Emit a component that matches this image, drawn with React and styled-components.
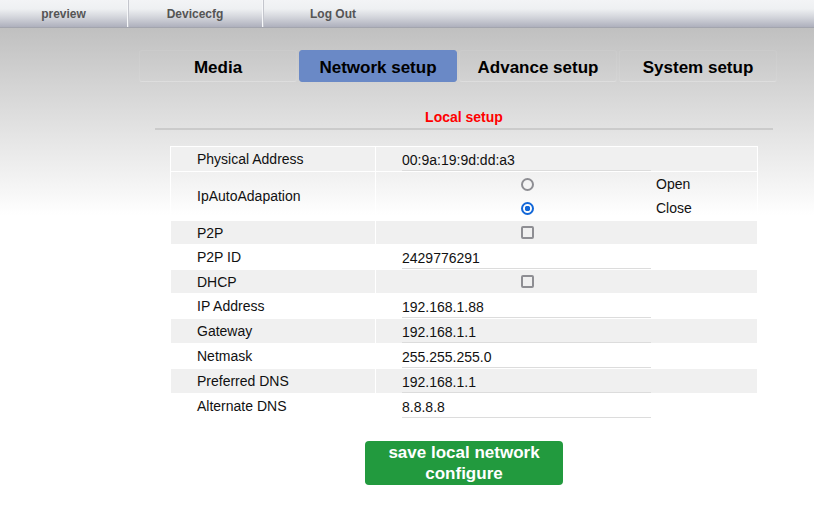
import styled, { createGlobalStyle } from "styled-components"
import { useState } from "react"

const GlobalStyle = createGlobalStyle`
  html, body {
    margin: 0;
    padding: 0;
    background: #fff;
    font-family: "Liberation Sans", Arial, sans-serif;
  }
`

const Page = styled.div`
  width: 814px;
  min-height: 519px;
  background: linear-gradient(to bottom, #c0c0c0 28px, #d2d2d2 80px, #e6e6e6 140px, #f6f6f6 190px, #fff 215px);
`

const TopBar = styled.div`
  height: 27px;
  display: flex;
  background: linear-gradient(to bottom, #f3f4f6 0px, #eef0f2 9px, #d4d6dc 17px, #aeb0bd 27px);
  border-bottom: 1px solid #a3a5ae;
`

const TopItem = styled.a`
  width: ${({ w }) => w}px;
  display: flex;
  align-items: center;
  justify-content: center;
  font-size: 12px;
  font-weight: bold;
  color: #555;
  text-decoration: none;
  border-right: ${({ last }) => (last ? "none" : "1px solid #f7f8fa")};
  box-shadow: ${({ last }) => (last ? "none" : "1px 0 0 #c4c6cd")};
`

const TabRow = styled.div`
  display: flex;
  gap: 2px;
  margin: 22px 0 0 139px;
`

const Tab = styled.div`
  width: 158px;
  height: 32px;
  padding-top: 3px;
  display: flex;
  align-items: center;
  justify-content: center;
  font-size: 17px;
  font-weight: bold;
  color: #000;
  border-radius: 3px;
  background: ${({ active }) => (active ? "#6a89c6" : "transparent")};
  border: 1px solid ${({ active }) => (active ? "#6a89c6" : "rgba(255,255,255,0.07)")};
  border-bottom-color: ${({ active }) => (active ? "#6a89c6" : "rgba(255,255,255,0.25)")};
  box-sizing: border-box;
`

const Content = styled.div`
  width: 618px;
  margin-left: 155px;
`

const SectionTitle = styled.div`
  padding-top: 6px;
  margin-top: 18px;
  line-height: 22px;
  text-align: center;
  font-size: 14px;
  font-weight: bold;
  color: #f00;
  border-bottom: 2px solid #cbcbcb;
`

const Table = styled.table`
  margin: 16px 0 0 15px;
  width: 588px;
  border-collapse: collapse;
  font-size: 14px;
  color: #111;
`

const Row = styled.tr`
  background: ${({ shade }) => (shade ? "#f0f0f0" : "transparent")};
`

const LabelCell = styled.td`
  width: 205px;
  height: 24px;
  padding: 0 0 0 26px;
  box-sizing: border-box;
  border: 1px solid #fff;
  vertical-align: middle;
`

const ValueCell = styled.td`
  padding: 0 0 0 26px;
  border: 1px solid #fff;
  vertical-align: middle;
`

const Field = styled.input`
  display: block;
  width: 249px;
  height: 21px;
  margin-top: 2px;
  padding: 0;
  border: none;
  border-bottom: 1px solid #dcdcdc;
  background: transparent;
  font: 14px "Liberation Sans", Arial, sans-serif;
  color: #111;
  outline: none;
`

const Options = styled.div`
  display: grid;
  grid-template-columns: 114px 22px 118px auto;
  grid-auto-rows: 24px;
  align-items: center;
  margin-left: -26px;
  padding: 0 0 0 26px;
`

const Choice = styled.input`
  grid-column: 2;
  justify-self: center;
  appearance: none;
  box-sizing: border-box;
  margin: 0;
  width: 13px;
  height: 13px;
  border-radius: 50%;
  border: 2px solid #8e8e93;
  background: transparent;

  &:checked {
    border-color: #1267d8;
    background: radial-gradient(circle, #1267d8 0 2.6px, transparent 3px);
  }
`

const ChoiceText = styled.span`
  grid-column: 4;
`

const CheckWrap = styled.div`
  width: 302px;
  display: flex;
  justify-content: center;
  margin-left: -26px;
`

const Check = styled.input`
  appearance: none;
  box-sizing: border-box;
  margin: 0;
  width: 13px;
  height: 13px;
  border: 2px solid #8e8e93;
  border-radius: 2px;
  background: transparent;
`

const SaveButton = styled.button`
  display: block;
  margin: 22px auto 0;
  width: 198px;
  height: 44px;
  padding: 0 8px;
  border: none;
  border-radius: 4px;
  background: #229a3e;
  color: #fff;
  font: bold 17px/21px "Liberation Sans", Arial, sans-serif;
`

const fields = [
  { label: "IP Address", value: "192.168.1.88" },
  { label: "Gateway", value: "192.168.1.1" },
  { label: "Netmask", value: "255.255.255.0" },
  { label: "Preferred DNS", value: "192.168.1.1" },
  { label: "Alternate DNS", value: "8.8.8.8" },
]

const App = () => {
  const [autoAdapt, setAutoAdapt] = useState("close")

  return (
    <Page>
      <GlobalStyle />
      <TopBar>
        <TopItem w={127}>preview</TopItem>
        <TopItem w={134}>Devicecfg</TopItem>
        <TopItem w={140} last>Log Out</TopItem>
      </TopBar>

      <TabRow>
        <Tab>Media</Tab>
        <Tab active>Network setup</Tab>
        <Tab>Advance setup</Tab>
        <Tab>System setup</Tab>
      </TabRow>

      <Content>
        <SectionTitle>Local setup</SectionTitle>
        <Table>
          <tbody>
            <Row shade>
              <LabelCell>Physical Address</LabelCell>
              <ValueCell>
                <Field readOnly defaultValue="00:9a:19:9d:dd:a3" />
              </ValueCell>
            </Row>
            <Row>
              <LabelCell>IpAutoAdapation</LabelCell>
              <ValueCell>
                <Options>
                  <Choice
                    type="radio"
                    name="auto"
                    checked={autoAdapt === "open"}
                    onChange={() => setAutoAdapt("open")}
                  />
                  <ChoiceText>Open</ChoiceText>
                  <Choice
                    type="radio"
                    name="auto"
                    checked={autoAdapt === "close"}
                    onChange={() => setAutoAdapt("close")}
                  />
                  <ChoiceText>Close</ChoiceText>
                </Options>
              </ValueCell>
            </Row>
            <Row shade>
              <LabelCell>P2P</LabelCell>
              <ValueCell>
                <CheckWrap>
                  <Check type="checkbox" />
                </CheckWrap>
              </ValueCell>
            </Row>
            <Row>
              <LabelCell>P2P ID</LabelCell>
              <ValueCell>
                <Field defaultValue="2429776291" />
              </ValueCell>
            </Row>
            <Row shade>
              <LabelCell>DHCP</LabelCell>
              <ValueCell>
                <CheckWrap>
                  <Check type="checkbox" />
                </CheckWrap>
              </ValueCell>
            </Row>
            {fields.map((f, i) => (
              <Row key={f.label} shade={i % 2 === 1}>
                <LabelCell>{f.label}</LabelCell>
                <ValueCell>
                  <Field defaultValue={f.value} />
                </ValueCell>
              </Row>
            ))}
          </tbody>
        </Table>
        <SaveButton>save local network configure</SaveButton>
      </Content>
    </Page>
  )
}

export default App
